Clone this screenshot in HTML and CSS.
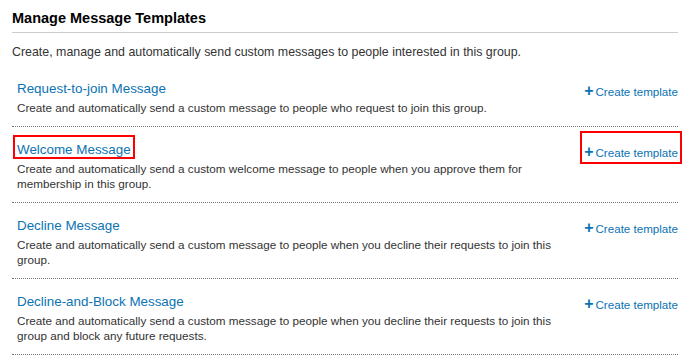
FILE: index.html
```html
<!DOCTYPE html>
<html lang="en">
  <head>
    <meta charset="UTF-8" />
    <meta name="viewport" content="width=device-width, initial-scale=1.0" />
    <title>Manage Message Templates</title>
    <link rel="stylesheet" href="styles.css">
  </head>
  <body>
    <div class="container">
      <h2 class="page-title">Manage Message Templates</h2>

      <p class="intro">
        Create, manage and automatically send custom messages to people interested in this group.
      </p>

      <ul class="templates">
        <li class="template">
          <div class="template-info">
            <a class="template-name" href="#">Request-to-join Message</a>
            <p class="template-desc">
              Create and automatically send a custom message to people who request to join this group.
            </p>
          </div>
          <a class="create-link" href="#"><span class="plus">+</span>Create template</a>
        </li>

        <li class="template">
          <div class="template-info">
            <a class="template-name highlight" href="#">Welcome Message</a>
            <p class="template-desc">
              Create and automatically send a custom welcome message to people when you approve them for membership in this group.
            </p>
          </div>
          <a class="create-link highlight" href="#"><span class="plus">+</span>Create template</a>
        </li>

        <li class="template">
          <div class="template-info">
            <a class="template-name" href="#">Decline Message</a>
            <p class="template-desc">
              Create and automatically send a custom message to people when you decline their requests to join this group.
            </p>
          </div>
          <a class="create-link" href="#"><span class="plus">+</span>Create template</a>
        </li>

        <li class="template">
          <div class="template-info">
            <a class="template-name" href="#">Decline-and-Block Message</a>
            <p class="template-desc">
              Create and automatically send a custom message to people when you decline their requests to join this group and block any future requests.
            </p>
          </div>
          <a class="create-link" href="#"><span class="plus">+</span>Create template</a>
        </li>
      </ul>
    </div>
  </body>
</html>
```

FILE: styles.css
```css
* {
  box-sizing: border-box;
}

html,
body {
  margin: 0;
  padding: 0;
  background: #fff;
}

body {
  font-family: "Liberation Sans", Arial, sans-serif;
  color: #333;
}

.container {
  margin: 0 21px 0 12px;
}

.page-title {
  margin: 0;
  padding: 8px 0 4px;
  font-size: 14.5px;
  line-height: 20px;
  font-weight: bold;
  color: #000;
  border-bottom: 1px solid #ccc;
}

.intro {
  margin: 12px 0 6px;
  font-size: 12.4px;
  line-height: 15px;
}

.templates {
  list-style: none;
  margin: 0;
  padding: 0;
}

.template {
  display: grid;
  grid-template-columns: 1fr auto;
  column-gap: 20px;
  align-items: start;
  padding: 13px 0 11px 5px;
  border-bottom: 1px dotted #777;
}

.template-name {
  display: inline-block;
  font-size: 13.4px;
  line-height: 20px;
  color: #0a73b3;
  text-decoration: none;
}

.template-desc {
  margin: 1px 0 0;
  font-size: 11.7px;
  line-height: 15px;
  color: #333;
}

.create-link {
  display: inline-block;
  margin-top: 4px;
  font-size: 11.6px;
  line-height: 16px;
  color: #0a73b3;
  text-decoration: none;
  white-space: nowrap;
}

.create-link .plus {
  font-weight: bold;
  font-size: 16px;
  margin-right: 2px;
}

/* red annotation boxes drawn over the items */
.highlight {
  position: relative;
}

.highlight::after {
  content: "";
  position: absolute;
  border: 2px solid #f00;
  pointer-events: none;
}

.template-name.highlight::after {
  inset: -5px -4px 1px -4px;
}

.create-link.highlight::after {
  inset: -13px -4px -3px -4px;
}
```
